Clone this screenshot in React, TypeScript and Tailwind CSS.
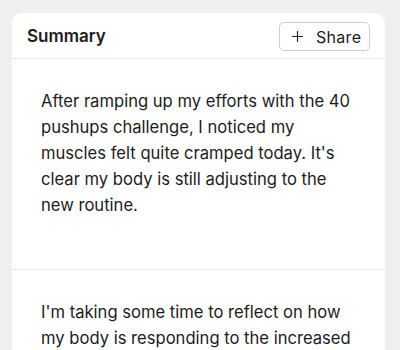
import React from 'react';
import { Plus } from 'lucide-react';

const entries = [
  "After ramping up my efforts with the 40 pushups challenge, I noticed my muscles felt quite cramped today. It's clear my body is still adjusting to the new routine.",
  "I'm taking some time to reflect on how my body is responding to the increased intensity of my workouts and what I can do to help it recover.",
];

const App = () => {
  return (
    <div className="h-[350px] overflow-hidden bg-[#efefef] pt-[13px] pl-3 font-['Inter',sans-serif] text-[#1c1c1c]">
      <div className="w-[373px] rounded-t-[10px] bg-white">
        {/* Header */}
        <div className="flex h-[46px] items-center justify-between border-b border-[#e6e6e6] pl-[15px] pr-[15px] pt-[2px]">
          <h2 className="text-[17px] font-semibold">Summary</h2>
          <button className="flex h-[29px] w-[91px] items-center gap-[10px] rounded-[5px] border border-[#cfcfcf] pl-[9px] text-[16px] tracking-[0.3px]">
            <Plus className="h-[17px] w-[17px]" strokeWidth={1.6} />
            <span>Share</span>
          </button>
        </div>

        {/* Entries */}
        {entries.map((text, index) => (
          <div
            key={index}
            className={`pl-[29px] pr-[24px] pt-[29px] pb-[51px] ${index > 0 ? 'border-t border-[#e6e6e6]' : ''}`}
          >
            <p className="text-[16.6px] leading-[26px]">{text}</p>
          </div>
        ))}
      </div>
    </div>
  );
};

export default App;
